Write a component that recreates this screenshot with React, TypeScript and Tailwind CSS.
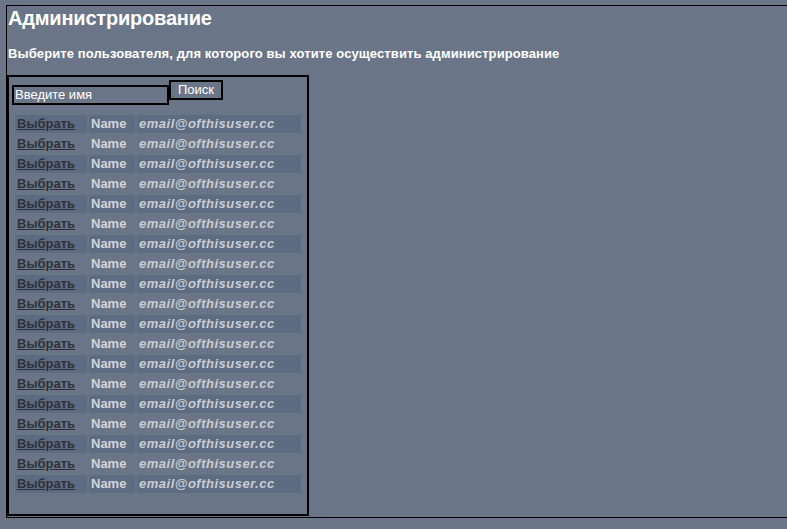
const rows = Array.from({ length: 19 }, (_, i) => i);

export default function App() {
  return (
    <div className="min-h-screen overflow-hidden bg-[#6a7687] pl-[6px] pt-[5px] font-['Liberation_Sans',Arial,sans-serif]">
      <div className="h-[513px] w-[800px] border border-black">
        <h1 className="pl-[1px] pt-[1px] text-[20px] font-bold leading-[23px] tracking-[-0.2px] text-white">
          Администрирование
        </h1>
        <p className="mt-[16px] pl-[1px] text-[13px] font-bold leading-[15px] tracking-[0.1px] text-white">
          Выберите пользователя, для которого вы хотите осуществить администрирование
        </p>
        <div className="mt-[14px] h-[441px] w-[302px] border-2 border-black">
          <div className="flex items-start pl-[3px]">
            <div className="mt-[8px] h-[20px] w-[157px] border-2 border-black pl-[1px] text-[13px] leading-[16px] text-white">
              Введите имя
            </div>
            <div className="mt-[3px] h-[20px] border-2 border-black px-[7px] text-[13px] leading-[16px] text-white">
              Поиск
            </div>
          </div>
          <table className="ml-[4px] mt-[8px] border-separate border-spacing-[2px] text-[13px] leading-[18px]">
            <tbody>
              {rows.map((i) => {
                const bg = i % 2 === 0 ? "bg-[#5e6c83]" : "";
                return (
                  <tr key={i}>
                    <td className={`h-[18px] w-[72px] px-[2px] p-0 ${bg}`}>
                      <a className="font-bold text-[#2e3238] underline">Выбрать</a>
                    </td>
                    <td className={`h-[18px] w-[46px] px-[2px] p-0 font-bold text-[#d2d4d8] ${bg}`}>
                      Name
                    </td>
                    <td className={`h-[18px] w-[164px] px-[2px] p-0 font-bold italic tracking-[0.5px] text-[#c9cdd4] ${bg}`}>
                      email@ofthisuser.cc
                    </td>
                  </tr>
                );
              })}
            </tbody>
          </table>
        </div>
      </div>
    </div>
  );
}
